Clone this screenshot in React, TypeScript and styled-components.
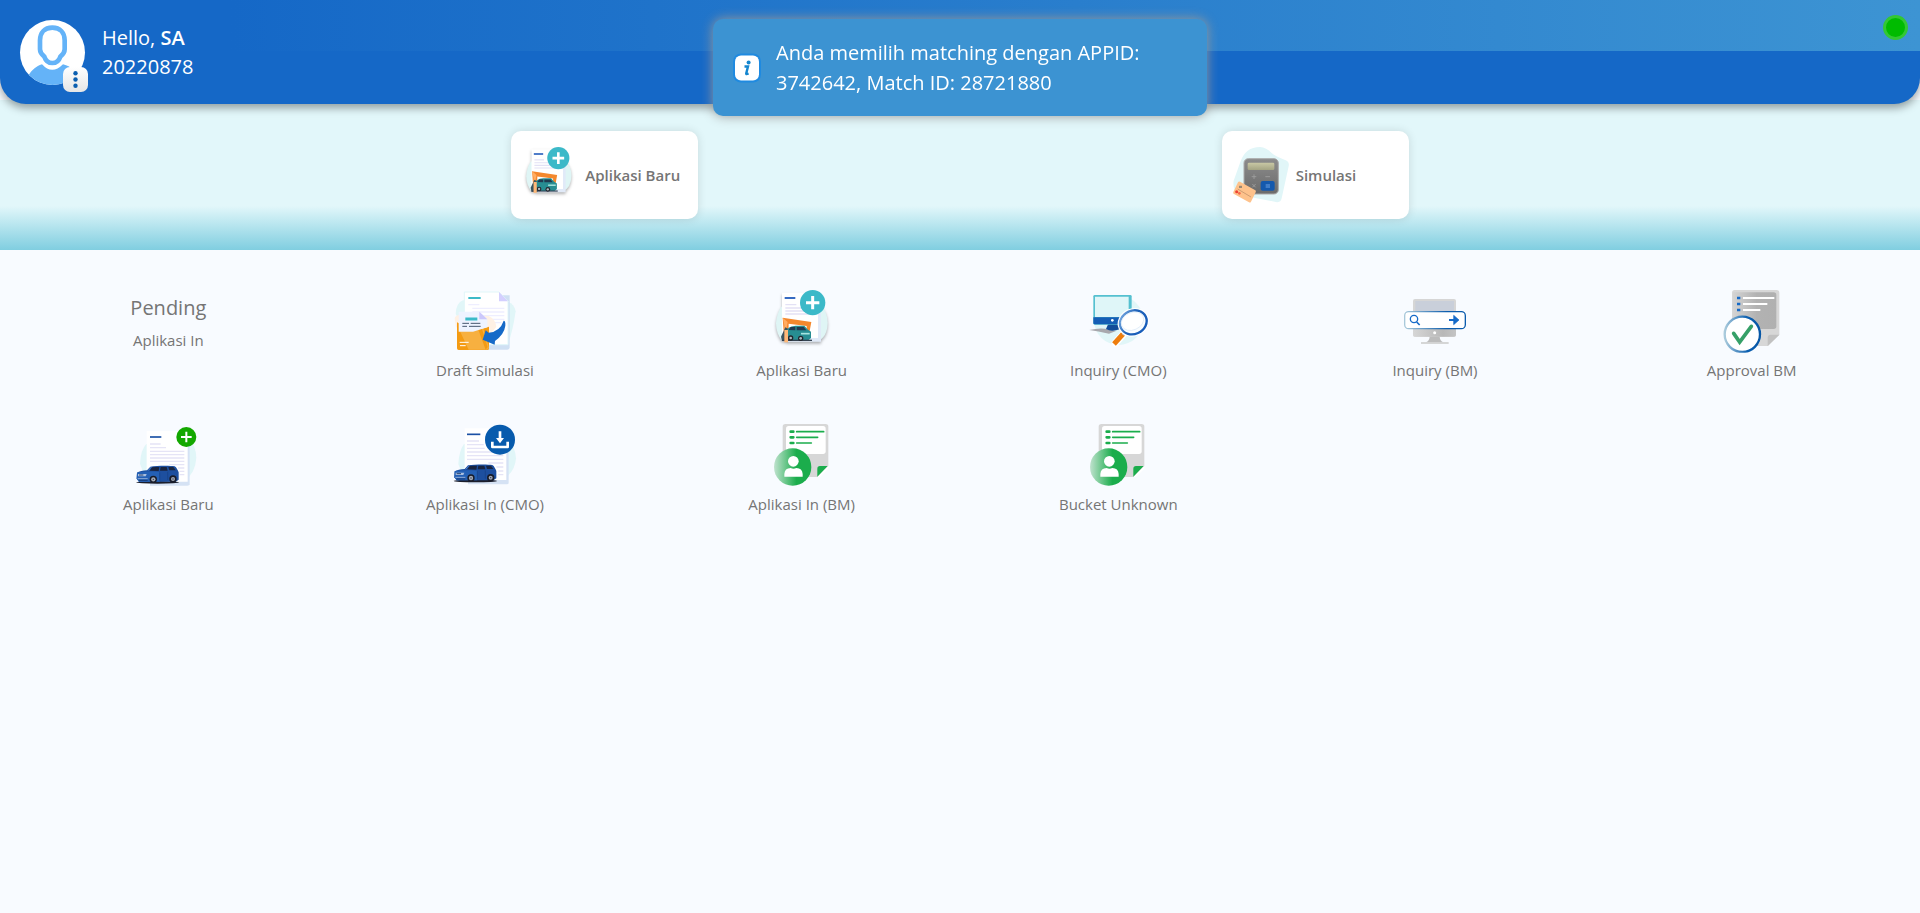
import React from "react";
import styled, { createGlobalStyle } from "styled-components";

const GlobalStyle = createGlobalStyle`
  *, *::before, *::after { box-sizing: border-box; }
  body {
    margin: 0;
    background: #f8fbff;
    color: #757575;
    font-family: "Open Sans", "Noto Sans", sans-serif;
    font-size: 15px;
    line-height: 24px;
  }
  button { font: inherit; color: inherit; border: 0; background: none; padding: 0; cursor: pointer; }
`;

const Header = styled.header`
  position: relative;
  z-index: 1;
  display: flex;
  align-items: flex-start;
  justify-content: space-between;
  min-height: 104px;
  padding: 15px 12px 12px 20px;
  color: #fff;
  border-radius: 0 0 26px 26px;
  background:
    linear-gradient(90deg, #1568c7 12%, #3d94d3 100%) 0 0 / 100% 51px no-repeat,
    #1568c7;
  box-shadow: 0 4px 8px rgba(0, 0, 0, 0.36);
`;

const Profile = styled.div`
  display: flex;
  gap: 17px;
  padding-top: 5px;
`;

const AvatarBox = styled.div`
  position: relative;
  width: 65px;
  height: 65px;
`;

const MoreButton = styled.button`
  position: absolute;
  right: -3px;
  bottom: -7px;
  display: flex;
  align-items: center;
  justify-content: center;
  width: 25px;
  height: 25px;
  border-radius: 7px;
  background: linear-gradient(#fff, #e6e6e6);
`;

const Greeting = styled.p`
  margin: 3px 0 0;
  font-size: 20px;
  line-height: 29px;
`;

const UserId = styled.span`
  display: block;
`;

const Name = styled.strong`
  font-weight: 600;
`;

const StatusDot = styled.span`
  width: 25px;
  height: 25px;
  border-radius: 50%;
  border: 3px solid #33c733;
  background: #00bb00;
`;

const Toast = styled.div`
  position: fixed;
  z-index: 2;
  top: 19px;
  left: 50%;
  transform: translateX(-50%);
  display: flex;
  align-items: center;
  gap: 15px;
  width: 494px;
  max-width: 100%;
  padding: 19px 60px 18px 20px;
  border-radius: 10px;
  background: #3c93d2;
  color: #fff;
  font-size: 20px;
  line-height: 30px;
  box-shadow: 0 0 12px #999;
`;

const Svg = styled.svg`
  display: block;
  flex: none;
  overflow: visible;
`;

const Hero = styled.section`
  display: flex;
  flex-wrap: wrap;
  justify-content: space-evenly;
  gap: 12px;
  margin-top: -4px;
  padding: 31px 0;
  background: linear-gradient(0deg, #80cee0 0, #e2f7fa 44px, #e2f7fa 100%);
`;

const ActionCard = styled.button`
  display: flex;
  align-items: center;
  gap: 8px;
  width: 187px;
  height: 88px;
  padding: 0 10px;
  border-radius: 10px;
  background: #fff;
  font-weight: 600;
  box-shadow: 0 0 10px rgba(0, 0, 0, 0.12);
`;

const Menu = styled.main`
  display: grid;
  grid-template-columns: repeat(6, 1fr);
  row-gap: 42px;
  padding: 40px 10px;
`;

const MenuItem = styled.button`
  display: flex;
  flex-direction: column;
  align-items: center;
  justify-content: flex-start;
  gap: 4px;
`;

const Label = styled.span`
  color: #757575;
`;

const Summary = styled.span`
  display: flex;
  flex-direction: column;
  gap: 5px;
  padding-top: 3px;
`;

const SummaryTitle = styled.span`
  font-size: 20px;
  line-height: 30px;
`;

type IconProps = { size?: number };

const Frame = ({ size = 64, children }: IconProps & { children: React.ReactNode }) => (
  <Svg width={size} height={size} viewBox="0 0 192 192" aria-hidden="true">
    {children}
  </Svg>
);

const Avatar = () => (
  <Svg width="65" height="65" viewBox="0 0 195 195" aria-hidden="true">
    <defs>
      <clipPath id="avatar-clip"><circle cx="97.5" cy="97.5" r="97.5" /></clipPath>
    </defs>
    <circle cx="97.5" cy="97.5" r="97.5" fill="#fff" />
    <g clipPath="url(#avatar-clip)">
      <path d="M25 195V167C36 149 48 139 66 133Q96 166 129 133C155 140 165 153 174 171V195Z" fill="#64b3f8" />
      <path d="M97 23C73 23 60 39 60 61V88C60 97 64 103 73 110C77 122 86 129 97 129S117 122 121 110C130 103 134 97 134 88V61C134 39 121 23 97 23Z" fill="#fff" stroke="#64b3f8" strokeWidth="14" />
    </g>
  </Svg>
);

const Dots = () => (
  <Svg width="5" height="17" viewBox="0 0 5 17" aria-hidden="true" fill="#0b5fb0">
    <circle cx="2.5" cy="2.2" r="2.2" />
    <circle cx="2.5" cy="8.5" r="2.2" />
    <circle cx="2.5" cy="14.8" r="2.2" />
  </Svg>
);

const InfoIcon = () => (
  <Svg width="28" height="30" viewBox="0 0 28 30" aria-hidden="true">
    <rect x="0" y="0.5" width="28" height="29" rx="8" fill="#1f8ae0" />
    <rect x="2" y="2.5" width="24" height="25" rx="6" fill="#fff" />
    <circle cx="15.6" cy="9.5" r="2" fill="#1486cf" />
    <path d="M11.5 13.5H15L13.2 20.5Q13 21.6 15.6 20.5" fill="none" stroke="#1486cf" strokeWidth="2.4" />
  </Svg>
);

const Car = ({ x, y }: { x: number; y: number }) => (
  <g transform={`translate(${x} ${y})`}>
    <ellipse cx="64" cy="49" rx="65" ry="4" fill="#1b1e2c" />
    <path d="M2 20C8 16 20 14 32 13L42 2C60 -1 100 -2 115 1C121 4 124 13 127 19V41L118 47H8L1 38Z" fill="#1d4f9f" />
    <path d="M2 20C15 16 45 16 70 18V47H8L1 38Z" fill="#2460b5" />
    <path d="M40 14L47 4C55 3 62 3 69 3L67 15ZM73 3H91L94 14H71ZM96 3H111L118 13H99Z" fill="#1a2540" />
    <path d="M35 14L45 3" stroke="#6a9ce0" strokeWidth="2" />
    <path d="M5 24H31L28 31H5Z" fill="#a9bfe0" />
    <path d="M8 27H21" stroke="#28436f" strokeWidth="3" />
    <path d="M4 38H34" stroke="#8fabd6" strokeWidth="3" />
    <path d="M8 43H34" stroke="#173a73" strokeWidth="3" />
    <path d="M70 19V44M94 17V42" stroke="#173f83" strokeWidth="2" />
    <circle cx="51" cy="40" r="11" fill="#181c29" />
    <circle cx="51" cy="40" r="6.5" fill="#a2a8b6" />
    <circle cx="110" cy="39" r="11" fill="#181c29" />
    <circle cx="110" cy="39" r="6" fill="#a2a8b6" />
    <circle cx="51" cy="40" r="2" fill="#343b4b" />
    <circle cx="110" cy="39" r="2" fill="#343b4b" />
  </g>
);

const DraftIcon = () => (
  <Frame>
    <path d="M30 31Q9 39 8 72L32 114L166 158Q179 126 188 64Q183 39 160 35Z" fill="#e1f6f8" />
    <path d="M43 16H170V172Q170 179 162 179H50Z" fill="#cfe0f3" />
    <path d="M34 6H138L165 34V164H34Z" fill="#fff" stroke="#e1f6f8" strokeWidth="3" />
    <path d="M138 6L165 34H138Z" fill="#d4d0ff" />
    <path d="M46 24H83" stroke="#3cbac8" strokeWidth="6" />
    <path d="M46 44H79M58 55H154M58 66H154M58 77H154M90 88H154M104 98H145" stroke="#eeeeff" strokeWidth="4" />
    <path d="M5 85Q9 70 38 76L107 78Q129 88 130 111L105 141L9 112Z" fill="#fff1e4" />
    <path d="M12 97L62 123L108 110V176Q108 180 102 180H17Q12 180 12 175Z" fill="#f49b13" />
    <path d="M21 124H60L71 117H91L108 174Q106 179 100 179H47Z" fill="#f7b040" />
    <path d="M75 117H87L104 171L98 179Z" fill="#f49b13" />
    <path d="M17 65H79L103 88V112L60 125H17Z" fill="#eef3ff" />
    <path d="M79 65L103 88H79Z" fill="#ccc8fb" />
    <path d="M37 87H73" stroke="#3cbac8" strokeWidth="9" />
    <path d="M28 100H48M53 100H82M28 109H42M48 109H83" stroke="#47576f" strokeWidth="3" />
    <path d="M20 157H47M21 167H38" stroke="#fff" strokeWidth="3" />
    <path d="M152 92Q158 92 157 107Q154 132 126 153L125 164L89 149L98 121L107 128Q141 125 152 92Z" fill="#156ac8" />
  </Frame>
);

const NewAppIcon = ({ size }: IconProps) => (
  <Frame size={size}>
    <g style={{ filter: "drop-shadow(0 6px 5px rgba(0,0,0,.3))" }}>
      <path d="M34 50Q20 70 18 100Q18 130 36 152H143Q172 142 173 98Q172 63 151 45Z" fill="#dff5f5" />
      <path d="M48 20H153V155H48Z" fill="#e1eaf8" />
      <path d="M36 8H144V144H36Z" fill="#fff" />
    </g>
    <path d="M44 24H76" stroke="#376bc2" strokeWidth="6" />
    <path d="M46 44H79M46 54H95M46 63H142M46 72H142" stroke="#e3e1f5" strokeWidth="4" />
    <path d="M38 83L124 96L119 123L110 122V108L56 101L55 153H43Z" fill="#f4882d" />
    <path d="M38 83L53 96L43 153V105Z" fill="#ffad62" />
    <path d="M33 140L46 112L57 118V153H36Z" fill="#3b5560" />
    <path d="M56 113Q62 108 77 107H103L114 119L123 125V144L115 151H57L51 139V120Z" fill="#278d92" />
    <path d="M56 120L62 111H76V121ZM80 111H101L109 121H80Z" fill="#213a50" />
    <path d="M93 131H119" stroke="#a7e4e0" strokeWidth="5" />
    <path d="M36 151H126" stroke="#354352" strokeWidth="4" />
    <circle cx="62" cy="144" r="8" fill="#24262e" /><circle cx="62" cy="144" r="4" fill="#aab9bf" />
    <circle cx="92" cy="145" r="8" fill="#24262e" /><circle cx="92" cy="145" r="4" fill="#aab9bf" />
    <path d="M43 120H54V157H43Z" fill="#ffb877" />
    <circle cx="128" cy="38" r="38" fill="#3cb9c8" />
    <path d="M108 38H148M128 18V58" stroke="#fff" strokeWidth="9" />
  </Frame>
);

const InquiryCmoIcon = () => (
  <Frame>
    <defs>
      <linearGradient id="lens-ring" x1="0" y1="0" x2="1" y2="1">
        <stop offset="0" stopColor="#87b8e9" /><stop offset=".45" stopColor="#1f62b8" /><stop offset="1" stopColor="#155bbb" />
      </linearGradient>
    </defs>
    <circle cx="98" cy="91" r="74" fill="#e1f6f8" />
    <path d="M10 120Q43 112 67 118L90 123L69 131Q35 124 10 120Z" fill="#a8a8ad" />
    <path d="M67 101H99L103 117Q77 128 60 117Z" fill="#134d99" />
    <rect x="22" y="15" width="115" height="89" rx="4" fill="#55c0d0" />
    <path d="M27 20H128V81H27Z" fill="#dff6f8" />
    <path d="M22 82H137V99Q137 103 132 103H27Q22 103 22 99Z" fill="#155eb5" />
    <circle cx="79" cy="91" r="4" fill="#fff" />
    <path d="M118 126L88 159" stroke="#fff" strokeWidth="22" strokeLinecap="round" />
    <path d="M111 132L84 162" stroke="#ee7d0d" strokeWidth="15" />
    <path d="M119 124L110 134" stroke="#bbc9d8" strokeWidth="8" />
    <g transform="rotate(-24 142 97)">
      <ellipse cx="142" cy="97" rx="48" ry="42" fill="#fff" />
      <ellipse cx="142" cy="97" rx="41" ry="35" fill="#fafdff" stroke="url(#lens-ring)" strokeWidth="7" />
      <ellipse cx="141" cy="93" rx="35" ry="26" fill="#fff" stroke="#d9e8f7" strokeWidth="2" />
    </g>
  </Frame>
);

const InquiryBmIcon = () => (
  <Frame>
    <defs>
      <linearGradient id="search-ring"><stop offset="0" stopColor="#a9c9da" /><stop offset=".7" stopColor="#0b5cad" /><stop offset="1" stopColor="#0b5cad" /></linearGradient>
      <linearGradient id="chin-grey"><stop offset="0" stopColor="#d6d6d6" /><stop offset=".7" stopColor="#b8b8b8" /><stop offset="1" stopColor="#c4c4c4" /></linearGradient>
    </defs>
    <rect x="30" y="27" width="129" height="113" rx="6" fill="#d6d6d6" />
    <path d="M37 33H153V107H37Z" fill="#c9cfda" />
    <path d="M30 115H159V134Q159 140 153 140H36Q30 140 30 134Z" fill="url(#chin-grey)" />
    <path d="M80 140H110Q111 153 121 157H69Q79 153 80 140Z" fill="#bcbcbc" />
    <path d="M54 159H137" stroke="#cecece" strokeWidth="5" />
    <circle cx="95" cy="128" r="4.5" fill="#fff" />
    <rect x="5" y="65" width="182" height="51" rx="12" fill="#fff" stroke="url(#search-ring)" strokeWidth="4" />
    <circle cx="33" cy="87" r="11" fill="none" stroke="#156ac8" strokeWidth="4" />
    <path d="M41 96L50 105" stroke="#156ac8" strokeWidth="5" />
    <path d="M138 90H156" stroke="#156ac8" strokeWidth="6" />
    <path d="M152 76L168 90L152 104Z" fill="#156ac8" stroke="#156ac8" strokeWidth="2" strokeLinejoin="round" />
  </Frame>
);

const ApprovalIcon = () => (
  <Frame>
    <defs>
      <linearGradient id="sheet-grey"><stop offset="0" stopColor="#d4d4d4" /><stop offset=".55" stopColor="#b2b2b2" /><stop offset="1" stopColor="#b0b0b0" /></linearGradient>
      <linearGradient id="check-ring"><stop offset="0" stopColor="#aacbdc" /><stop offset=".65" stopColor="#0b5fb0" /><stop offset="1" stopColor="#0757a6" /></linearGradient>
      <clipPath id="approval-clip"><path d="M0 0H192V188H0Z" /></clipPath>
    </defs>
    <path d="M44 0H170Q178 0 178 8V134L144 168H36V8Q36 0 44 0Z" fill="#d7d7d7" />
    <path d="M38 7H161Q169 7 169 15V109Q169 117 161 117H38Z" fill="url(#sheet-grey)" />
    <path d="M143 168V143Q143 134 152 134H178Z" fill="#c1c1c1" />
    <path d="M51 24H61M51 42H61M51 60H61" stroke="#156ac8" strokeWidth="7" />
    <path d="M69 24H163M69 42H142M69 60H121" stroke="#fff" strokeWidth="6" />
    <g clipPath="url(#approval-clip)">
      <circle cx="67" cy="133" r="53" fill="#fff" stroke="url(#check-ring)" strokeWidth="7" />
    </g>
    <path d="M41 130L59 156L94 109" fill="none" stroke="#36a068" strokeWidth="11" strokeLinecap="round" />
  </Frame>
);

const NewVehicleIcon = () => (
  <Frame>
    <path d="M31 60Q14 77 12 119L29 166H149Q178 146 181 101Q180 65 158 46Z" fill="#e1f6f8" />
    <path d="M42 31H161V181Q161 185 154 185H42Z" fill="#d5e2f4" />
    <path d="M32 21H155V173H32Z" fill="#fff" />
    <path d="M42 39H76" stroke="#1b51a5" strokeWidth="5" />
    <path d="M42 60H74M42 71H90M42 82H145M42 92H145M42 102H145M42 112H145M100 122H145M126 132H145M131 142H145M131 152H145" stroke="#e5e4f6" strokeWidth="4" />
    <Car x={1} y={126} />
    <circle cx="151" cy="39" r="30" fill="#14a800" />
    <path d="M135 39H167M151 23V55" stroke="#fff" strokeWidth="6" />
  </Frame>
);

const DownloadVehicleIcon = () => (
  <Frame>
    <path d="M33 60Q18 80 16 120L33 166H149Q186 146 189 103Q187 70 167 49Z" fill="#e1f6f8" />
    <path d="M45 24H167V177Q167 181 161 181H45Z" fill="#d5e2f4" />
    <path d="M35 13H160V168H35Z" fill="#fff" />
    <path d="M42 31H82" stroke="#1b51a5" strokeWidth="5" />
    <path d="M42 51H78M42 62H92M42 73H95M42 84H151M42 95H151M42 106H151M106 117H151M130 129H151M136 141H151M136 152H151" stroke="#e5e4f6" strokeWidth="4" />
    <Car x={3} y={122} />
    <circle cx="141" cy="47" r="45" fill="#085bad" />
    <path d="M118 53V69H164V53" fill="none" stroke="#fff" strokeWidth="8" strokeLinejoin="round" />
    <path d="M137 22H145V42H153L141 58L129 42H137Z" fill="#fff" />
  </Frame>
);

const PersonSheetIcon = ({ id }: { id: string }) => (
  <Frame>
    <defs>
      <linearGradient id={id}><stop offset="0" stopColor="#c0e2ce" /><stop offset=".6" stopColor="#1bad4c" /><stop offset="1" stopColor="#1bad4c" /></linearGradient>
    </defs>
    <path d="M46 0H167Q175 0 175 8V126L142 159H38V8Q38 0 46 0Z" fill="#d7d7d7" />
    <rect x="48" y="6" width="119" height="84" rx="8" fill="#fff" />
    <path d="M142 159V134Q142 126 150 126H173Z" fill="#1bad4c" />
    <path d="M142 159L175 126V134L150 159Z" fill="#fff" />
    <path d="M62 23H70M62 40H70M62 57H70" stroke="#1bad4c" strokeWidth="8" strokeLinecap="round" />
    <path d="M80 23H161M80 40H143M80 57H124" stroke="#1bad4c" strokeWidth="5" strokeLinecap="round" />
    <circle cx="68" cy="129" r="56" fill={`url(#${id})`} />
    <circle cx="70" cy="112" r="16" fill="#fff" />
    <path d="M43 158V150Q44 132 62 132Q70 137 79 132Q97 132 98 150V158Z" fill="#fff" />
  </Frame>
);

const CalculatorIcon = () => (
  <Svg width="56" height="56" viewBox="0 0 168 168" aria-hidden="true">
    <defs>
      <linearGradient id="calc-body" x1="0" y1="0" x2="0" y2="1"><stop offset="0" stopColor="#8c8c8c" /><stop offset="1" stopColor="#6b6b6b" /></linearGradient>
      <linearGradient id="calc-screen" x1="0" y1="0" x2="0" y2="1"><stop offset="0" stopColor="#c9c8a5" /><stop offset="1" stopColor="#a4a483" /></linearGradient>
    </defs>
    <path d="M25 45Q40 0 84 0Q103 1 119 18Q130 28 161 40Q173 45 170 58L149 154Q146 168 132 165L20 143Q1 128 5 101Z" fill="#e1f6f8" />
    <rect x="36" y="35" width="103" height="106" rx="13" fill="url(#calc-body)" stroke="#aaa" strokeWidth="3" />
    <rect x="47" y="47" width="80" height="22" rx="4" fill="url(#calc-screen)" />
    <path d="M59 89H73M66 82V96M100 89H114M61 111L71 121M71 111L61 121" stroke="#a0a0a0" strokeWidth="2.5" />
    <rect x="86" y="102" width="42" height="29" rx="6" fill="#1559ad" />
    <path d="M101 114H114M101 120H114" stroke="#6da2e4" strokeWidth="3" />
    <path d="M24 104L70 130Q73 132 71 136L57 164Q55 168 51 166L6 141Q2 139 4 135L18 106Q20 102 24 104Z" fill="#fec28b" />
    <path d="M17 126L57 150" stroke="#b88a63" strokeWidth="2" />
    <rect x="21" y="116" width="9" height="7" rx="1" fill="#9b8a75" />
    <circle cx="14" cy="134" r="4.5" fill="#ee4033" /><circle cx="22" cy="139" r="4" fill="#f4694a" />
  </Svg>
);

const entries = [
  { label: "Draft Simulasi", icon: <DraftIcon /> },
  { label: "Aplikasi Baru", icon: <NewAppIcon /> },
  { label: "Inquiry (CMO)", icon: <InquiryCmoIcon /> },
  { label: "Inquiry (BM)", icon: <InquiryBmIcon /> },
  { label: "Approval BM", icon: <ApprovalIcon /> },
  { label: "Aplikasi Baru", icon: <NewVehicleIcon /> },
  { label: "Aplikasi In (CMO)", icon: <DownloadVehicleIcon /> },
  { label: "Aplikasi In (BM)", icon: <PersonSheetIcon id="person-bm" /> },
  { label: "Bucket Unknown", icon: <PersonSheetIcon id="person-bucket" /> },
];

export default function App() {
  return (
    <>
      <GlobalStyle />
      <Header>
        <Profile>
          <AvatarBox>
            <Avatar />
            <MoreButton type="button" aria-label="Menu"><Dots /></MoreButton>
          </AvatarBox>
          <Greeting>
            Hello, <Name>SA</Name>
            <UserId>20220878</UserId>
          </Greeting>
        </Profile>
        <StatusDot role="img" aria-label="Online" />
      </Header>
      <Toast role="status">
        <InfoIcon />
        <span>Anda memilih matching dengan APPID: 3742642, Match ID: 28721880</span>
      </Toast>
      <Hero>
        <ActionCard type="button"><NewAppIcon size={56} />Aplikasi Baru</ActionCard>
        <ActionCard type="button"><CalculatorIcon />Simulasi</ActionCard>
      </Hero>
      <Menu>
        <MenuItem type="button">
          <Summary>
            <SummaryTitle>Pending</SummaryTitle>
            <Label>Aplikasi In</Label>
          </Summary>
        </MenuItem>
        {entries.map((entry, index) => (
          <MenuItem type="button" key={index}>
            {entry.icon}
            <Label>{entry.label}</Label>
          </MenuItem>
        ))}
      </Menu>
    </>
  );
}
